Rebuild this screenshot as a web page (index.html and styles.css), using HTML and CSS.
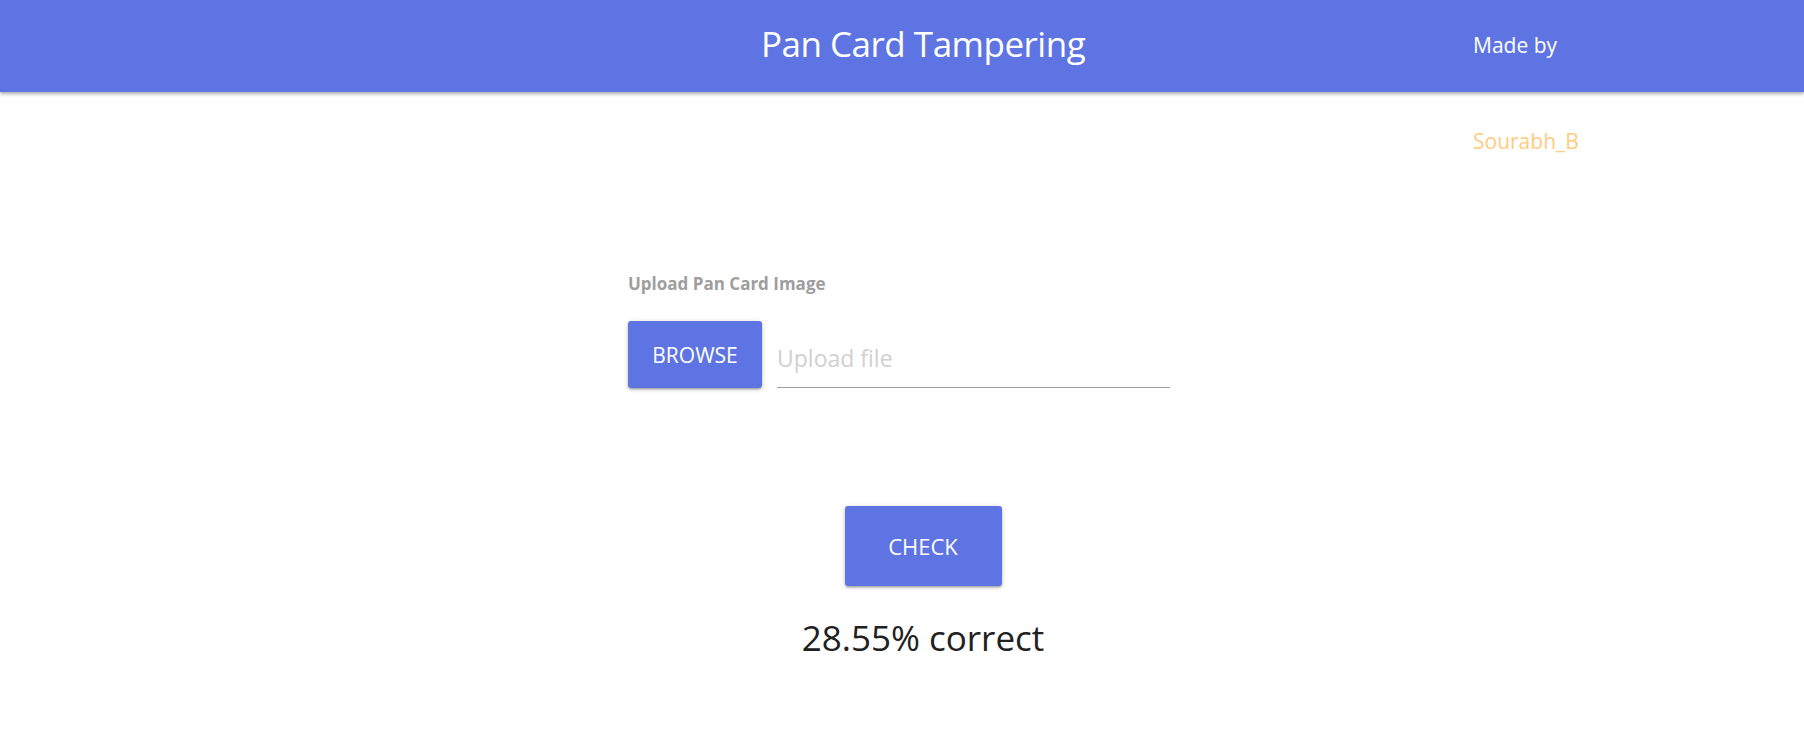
FILE: index.html
```html
<!DOCTYPE html>
<html lang="en">
<head>
<meta charset="utf-8">
<title>Pan Card Tampering</title>
<link rel="stylesheet" href="styles.css">
</head>
<body>
<header class="navbar">
  <div class="nav-inner">
    <div class="nav-spacer"></div>
    <h1 class="brand">Pan Card Tampering</h1>
    <div class="credit">
      <div class="credit-label">Made by</div>
      <div class="credit-name">Sourabh_B</div>
    </div>
  </div>
</header>
<main class="content">
  <form class="upload-form">
    <label class="field-label">Upload Pan Card Image</label>
    <div class="file-field">
      <span class="btn btn-browse">Browse</span>
      <div class="file-path">Upload file</div>
    </div>
  </form>
  <div class="actions">
    <button class="btn btn-check" type="button">Check</button>
    <p class="result">28.55% correct</p>
  </div>
</main>
</body>
</html>
```
FILE: styles.css
```css
* { box-sizing: border-box; }
html, body { margin: 0; padding: 0; }
body {
  font-family: "Open Sans", "Noto Sans", sans-serif;
  background: #ffffff;
  color: #212121;
}
.navbar {
  height: 92px;
  background: #5e74e3;
  box-shadow: 0 2px 3px rgba(0,0,0,0.25), 0 1px 6px rgba(0,0,0,0.12);
  position: relative;
  z-index: 1;
}
.nav-inner {
  display: grid;
  grid-template-columns: 761px 324px 1fr;
  height: 92px;
}
.brand {
  margin: 0;
  font-weight: 400;
  font-size: 35px;
  letter-spacing: -0.5px;
  line-height: 88px;
  color: #ffffff;
  text-align: center;
  white-space: nowrap;
}
.credit {
  padding-left: 388px;
  font-size: 21px;
  line-height: 94px;
  white-space: nowrap;
}
.credit-label { color: #ffffff; margin-top: -2px; }
.credit-name { color: #ffcc80; margin-top: 2px; }
.content {
  padding-top: 180px;
}
.upload-form {
  margin-left: calc(50% - 274px);
  width: 542px;
}
.field-label {
  display: block;
  font-size: 17px;
  font-weight: 700;
  line-height: 24px;
  color: #9e9e9e;
}
.file-field {
  display: flex;
  margin-top: 25px;
}
.btn {
  display: inline-flex;
  align-items: center;
  justify-content: center;
  background: #5e74e3;
  color: #ffffff;
  border: none;
  border-radius: 3px;
  text-transform: uppercase;
  font-family: inherit;
  font-size: 21px;
  box-shadow: 0 2px 2px rgba(0,0,0,0.14), 0 3px 1px -2px rgba(0,0,0,0.12), 0 1px 5px rgba(0,0,0,0.2);
}
.btn-browse {
  width: 134px;
  height: 67px;
}
.file-path {
  margin-left: 15px;
  width: 393px;
  height: 67px;
  padding-top: 5px;
  border-bottom: 1px solid #9e9e9e;
  font-size: 23px;
  line-height: 64px;
  color: #d0d0d0;
}
.actions {
  display: flex;
  flex-direction: column;
  align-items: center;
  padding-left: 42px;
  margin-top: 118px;
}
.btn-check {
  width: 157px;
  height: 80px;
  font-size: 22px;
}
.result {
  margin: 28px 0 0;
  font-size: 35px;
  line-height: 48px;
  color: #212121;
}
```
